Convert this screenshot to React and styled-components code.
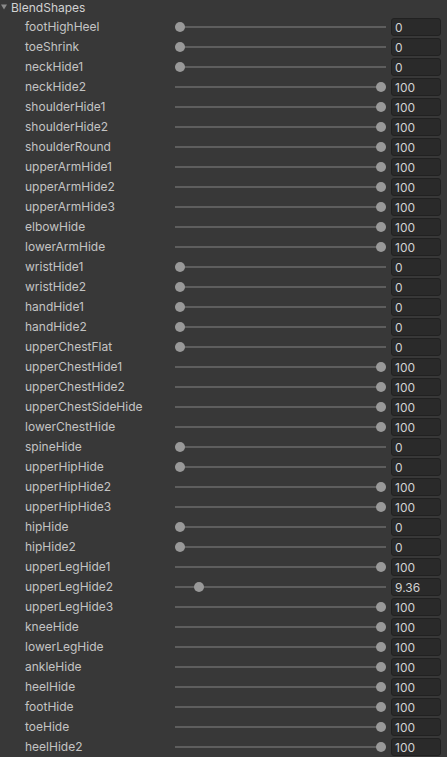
import React from "react";
import styled, { createGlobalStyle } from "styled-components";

const Global = createGlobalStyle`
  html, body { margin: 0; padding: 0; background: #383838; }
  body { font-family: Inter, "Noto Sans", "Liberation Sans", sans-serif; }
`;

const shapes = [
  ["footHighHeel", 0], ["toeShrink", 0], ["neckHide1", 0], ["neckHide2", 100],
  ["shoulderHide1", 100], ["shoulderHide2", 100], ["shoulderRound", 100],
  ["upperArmHide1", 100], ["upperArmHide2", 100], ["upperArmHide3", 100],
  ["elbowHide", 100], ["lowerArmHide", 100], ["wristHide1", 0], ["wristHide2", 0],
  ["handHide1", 0], ["handHide2", 0], ["upperChestFlat", 0], ["upperChestHide1", 100],
  ["upperChestHide2", 100], ["upperChestSideHide", 100], ["lowerChestHide", 100],
  ["spineHide", 0], ["upperHipHide", 0], ["upperHipHide2", 100], ["upperHipHide3", 100],
  ["hipHide", 0], ["hipHide2", 0], ["upperLegHide1", 100], ["upperLegHide2", 9.36],
  ["upperLegHide3", 100], ["kneeHide", 100], ["lowerLegHide", 100], ["ankleHide", 100],
  ["heelHide", 100], ["footHide", 100], ["toeHide", 100], ["heelHide2", 100],
];

const Panel = styled.div`
  width: 447px;
  height: 757px;
  overflow: hidden;
  background: #383838;
  color: #c4c4c4;
  font-size: 12px;
`;

const Header = styled.div`
  height: 14px;
  display: flex;
  align-items: center;
  gap: 4px;
  padding-left: 1px;
  margin-bottom: 2px;
  color: #d2d2d2;
`;

const Arrow = styled.svg`
  width: 6px;
  height: 6px;
  flex: none;
`;

const List = styled.div`
  display: flex;
  flex-direction: column;
`;

const Row = styled.div`
  height: 20px;
  display: grid;
  grid-template-columns: 145px 211px 50px;
  column-gap: 5px;
  align-items: center;
  padding-left: 25px;
`;

const Label = styled.span`
  white-space: nowrap;
  line-height: 20px;
  padding-top: 1px;
`;

const Slider = styled.div`
  position: relative;
  height: 10px;
  display: flex;
  align-items: center;
`;

const Track = styled.div`
  flex: 1;
  height: 2px;
  background: #5e5e5e;
`;

const Thumb = styled.div`
  position: absolute;
  top: 0;
  width: 10px;
  height: 10px;
  border-radius: 50%;
  background: #999999;
`;

const Field = styled.div`
  box-sizing: border-box;
  height: 18px;
  border: 1px solid #212121;
  border-radius: 3px;
  background: #2a2a2a;
  padding-left: 3px;
  padding-top: 1px;
  display: flex;
  align-items: center;
  color: #d2d2d2;
`;

export default function App() {
  return (
    <Panel>
      <Global />
      <Header>
        <Arrow viewBox="0 0 6 6">
          <path d="M0 0.5 L6 0.5 L3 5.5 Z" fill="#8a8a8a" />
        </Arrow>
        <span>BlendShapes</span>
      </Header>
      <List>
        {shapes.map(([name, v]) => (
          <Row key={name}>
            <Label>{name}</Label>
            <Slider>
              <Track />
              <Thumb style={{ left: `${(v / 100) * 201}px` }} />
            </Slider>
            <Field>{v}</Field>
          </Row>
        ))}
      </List>
    </Panel>
  );
}
